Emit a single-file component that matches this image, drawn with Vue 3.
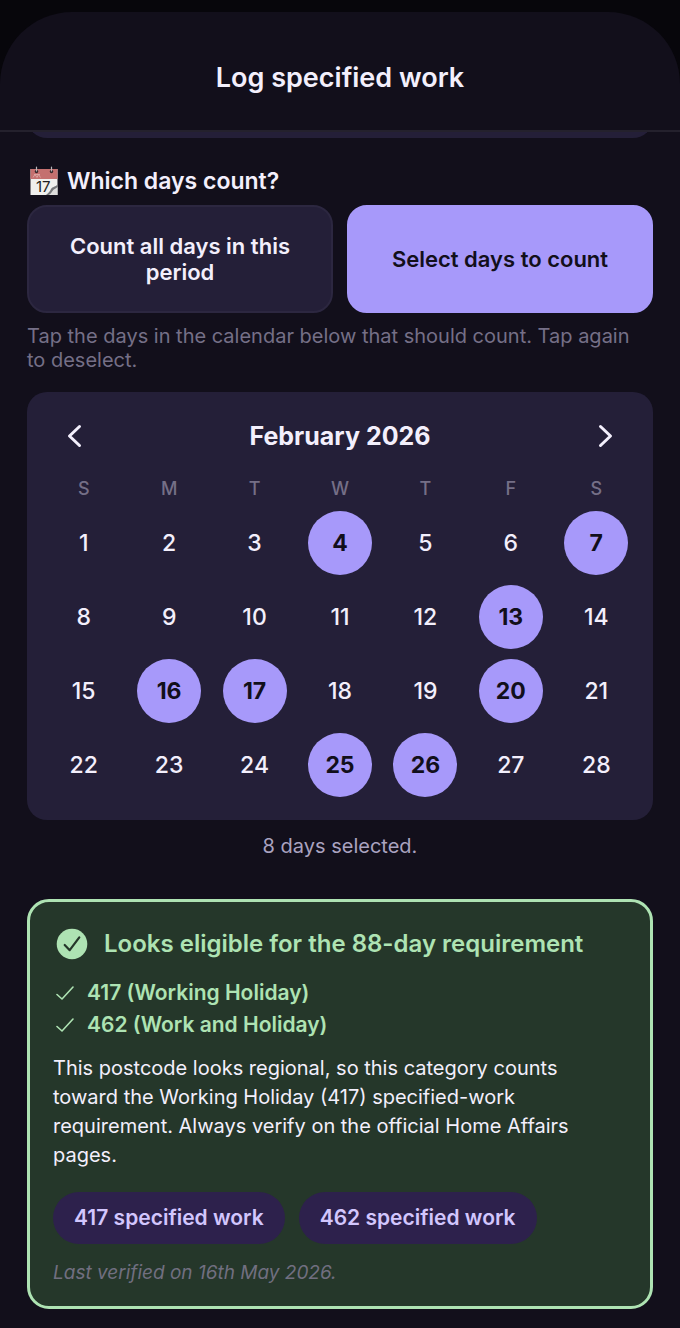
<template>
  <div class="screen">
    <main class="sheet">
      <header class="header">
        <h1 class="title">Log specified work</h1>
      </header>

      <div class="content">
        <div class="previous">
          <div class="previous-card"></div>
        </div>

        <section class="mode">
          <h2 class="mode-title">
            <svg class="mode-icon" viewBox="0 0 28 30" aria-hidden="true">
              <rect x="0.5" y="3" width="27" height="26" fill="#f0f0ee" />
              <rect x="0.5" y="3" width="27" height="10" fill="#c4706f" />
              <path d="M3 11.5l2-3 2 3M7 11.5l1.5-3 2 3M4 8.5h6" fill="none" stroke="#dba3a0" stroke-width="1" />
              <circle cx="6.5" cy="5.5" r="1.7" fill="#35272b" />
              <circle cx="21.5" cy="5.5" r="1.7" fill="#35272b" />
              <path d="M6.5 1v4M21.5 1v4" stroke="#b9b7ba" stroke-width="1.2" stroke-linecap="round" />
              <text x="6" y="26" class="mode-icon-day">17</text>
              <path d="M27.5 18.5c-2 2.5-5 2-6.500 4.500-.8 2-2.500 4-5 6h11.500z" fill="#77787b" />
              <path d="M27.5 21c-2 2-4 2-5 4-.8 1.5-2 3-4 4h9z" fill="#dededd" />
            </svg>
            <span>Which days count?</span>
          </h2>
          <div class="mode-options">
            <button
              v-for="option in options"
              :key="option.id"
              type="button"
              :class="['option', { 'option-active': mode === option.id }]"
              :aria-pressed="mode === option.id"
              @click="mode = option.id"
            >
              {{ option.label }}
            </button>
          </div>
          <p class="hint">Tap the days in the calendar below that should count. Tap again to deselect.</p>
        </section>

        <section class="calendar">
          <div class="calendar-header">
            <button type="button" class="nav" aria-label="Previous month">
              <svg viewBox="0 0 24 28" class="nav-icon" aria-hidden="true">
                <path d="M16.5 4.5L6.500 14l10 9.5" />
              </svg>
            </button>
            <h3 class="month">February 2026</h3>
            <button type="button" class="nav" aria-label="Next month">
              <svg viewBox="0 0 24 28" class="nav-icon" aria-hidden="true">
                <path d="M7.5 4.5L17.500 14l-10 9.5" />
              </svg>
            </button>
          </div>
          <div class="weekdays">
            <span v-for="(name, i) in weekdays" :key="i">{{ name }}</span>
          </div>
          <div class="days">
            <button
              v-for="day in 28"
              :key="day"
              type="button"
              :class="['day', { 'day-selected': selected.includes(day) }]"
              :aria-pressed="selected.includes(day)"
              @click="toggle(day)"
            >
              {{ day }}
            </button>
          </div>
        </section>
        <p class="summary">{{ selected.length }} days selected.</p>

        <section class="result">
          <h3 class="result-title">
            <svg class="result-icon" viewBox="0 0 32 32" aria-hidden="true">
              <circle cx="16" cy="16" r="15.3" fill="#aee3b3" />
              <path d="M8.7 17l5 5.2L23.3 9.300" fill="none" stroke="#25372a" stroke-width="2.2" stroke-linecap="round" stroke-linejoin="round" />
            </svg>
            <span>Looks eligible for the 88-day requirement</span>
          </h3>
          <ul class="visas">
            <li v-for="visa in visas" :key="visa">
              <svg class="visa-icon" viewBox="0 0 18 16" aria-hidden="true">
                <path d="M1 9.5l5 4.5L17 2" stroke-width="1.6" />
              </svg>
              <span>{{ visa }}</span>
            </li>
          </ul>
          <p class="result-text">
            This postcode looks regional, so this category counts toward the Working Holiday (417) specified-work
            requirement. Always verify on the official Home Affairs pages.
          </p>
          <div class="links">
            <a href="#" class="chip">417 specified work</a>
            <a href="#" class="chip">462 specified work</a>
          </div>
          <p class="verified">Last verified on 16th May 2026.</p>
        </section>
      </div>
    </main>
  </div>
</template>

<script setup>
import { ref } from 'vue'

const options = [
  { id: 'all', label: 'Count all days in this period' },
  { id: 'select', label: 'Select days to count' }
]
const weekdays = ['S', 'M', 'T', 'W', 'T', 'F', 'S']
const visas = ['417 (Working Holiday)', '462 (Work and Holiday)']

const mode = ref('select')
const selected = ref([4, 7, 13, 16, 17, 20, 25, 26])

const toggle = (day) => {
  selected.value = selected.value.includes(day)
    ? selected.value.filter((d) => d !== day)
    : [...selected.value, day]
}
</script>

<style>
body {
  background-color: #120f1b;
}
</style>

<style scoped>
.screen {
  padding-top: 12px;
  background-color: #07060b;
  color: #f3effc;
  font-family: Inter, 'Liberation Sans', sans-serif;
}

.screen * {
  box-sizing: border-box;
}

h1,
h2,
h3,
p,
ul {
  margin: 0;
  padding: 0;
}

button {
  padding: 0;
  border: none;
  background: none;
  color: inherit;
  font-family: inherit;
  cursor: pointer;
}

.sheet {
  background-color: #120f1b;
  border-radius: 72px 72px 0 0;
}

.header {
  padding: 49px 28px 35px;
  border-bottom: 2px solid #24212d;
}

.title {
  font-size: 27px;
  line-height: 34px;
  font-weight: 600;
  text-align: center;
}

.content {
  padding: 0 27px 20px;
}

/* Bottom edge of the card scrolled under the header */
.previous {
  display: flex;
  align-items: flex-end;
  height: 6px;
  overflow: hidden;
}

.previous-card {
  flex: 1;
  height: 40px;
  background-color: #241f38;
  border-radius: 20px;
}

.mode {
  padding-top: 27px;
}

.mode-title {
  display: flex;
  align-items: center;
  gap: 9px;
  padding-left: 3px;
  font-size: 23px;
  line-height: 32px;
  font-weight: 600;
}

.mode-icon {
  width: 28px;
  height: 30px;
}

.mode-icon-day {
  font-family: Inter, sans-serif;
  font-size: 15px;
  font-weight: 400;
  fill: #1f1f21;
}

.mode-options {
  display: grid;
  grid-template-columns: 1fr 1fr;
  gap: 14px;
  margin-top: 8px;
}

.option {
  min-height: 108px;
  padding: 26px;
  border: 2px solid #2c2740;
  border-radius: 20px;
  background-color: #241f38;
  font-size: 22px;
  line-height: 26px;
  font-weight: 600;
}

.option-active {
  border-color: #a799fa;
  background-color: #a799fa;
  color: #120f1b;
}

.hint {
  margin-top: 11px;
  font-size: 20px;
  line-height: 24px;
  color: #756f87;
}

.calendar {
  margin-top: 20px;
  padding: 20px 14px 23px;
  border-radius: 20px;
  background-color: #241f38;
}

.calendar-header {
  display: flex;
  align-items: center;
  justify-content: space-between;
  padding: 0 22px;
}

.nav {
  display: flex;
  width: 24px;
  height: 48px;
  align-items: center;
}

.nav-icon {
  width: 24px;
  height: 28px;
  fill: none;
  stroke: #f3effc;
  stroke-width: 3;
  stroke-linecap: round;
  stroke-linejoin: round;
}

.month {
  font-size: 25px;
  line-height: 30px;
  font-weight: 700;
}

.weekdays,
.days {
  display: grid;
  grid-template-columns: repeat(7, 1fr);
  justify-items: center;
}

.weekdays {
  margin-top: 17px;
  font-size: 18px;
  line-height: 24px;
  font-weight: 500;
  color: #756f87;
}

.days {
  row-gap: 10px;
  margin-top: 10px;
}

.day {
  width: 64px;
  height: 64px;
  border-radius: 50%;
  font-size: 23px;
  font-weight: 500;
}

.day-selected {
  background-color: #a799fa;
  color: #120f1b;
  font-weight: 700;
}

.summary {
  margin-top: 14px;
  font-size: 20px;
  line-height: 24px;
  text-align: center;
  color: #aaa3c0;
}

.result {
  margin-top: 41px;
  padding: 26px 23px 21px;
  border: 3px solid #aee3b3;
  border-radius: 22px;
  background-color: #25372a;
}

.result-title {
  display: flex;
  align-items: center;
  gap: 16px;
  padding-left: 3px;
  font-size: 24px;
  line-height: 32px;
  font-weight: 600;
  color: #aee3b3;
}

.result-icon {
  width: 32px;
  height: 32px;
}

.visas {
  margin-top: 17px;
  list-style: none;
  font-size: 21px;
  line-height: 32px;
  font-weight: 600;
  color: #aee3b3;
}

.visas li {
  display: flex;
  align-items: center;
  gap: 13px;
  padding-left: 3px;
}

.visa-icon {
  width: 18px;
  height: 16px;
  fill: none;
  stroke: #aee3b3;
  stroke-linecap: round;
  stroke-linejoin: round;
}

.result-text {
  margin-top: 13px;
  font-size: 20px;
  line-height: 29px;
}

.links {
  display: flex;
  flex-wrap: wrap;
  gap: 14px;
  margin-top: 22px;
}

.chip {
  padding: 11px 21px;
  border-radius: 26px;
  background-color: #2d214c;
  font-size: 21px;
  line-height: 30px;
  font-weight: 600;
  color: #d2c6fd;
  text-decoration: none;
}

.verified {
  margin-top: 17px;
  font-size: 19px;
  line-height: 24px;
  font-style: italic;
  color: #716f80;
}
</style>
